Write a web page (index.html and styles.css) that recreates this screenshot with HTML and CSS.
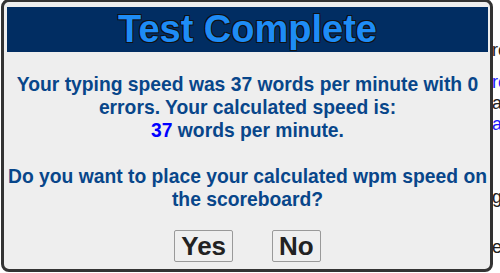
FILE: index.html
```html
<html><head>
<meta charset="UTF-8">
<meta name="viewport" content="width=device-width, initial-scale=1.0">
<title>Typing Test</title>
<link rel="stylesheet" href="styles.css">
</head>
<body>
  <div class="page">
    <p class="line first">results</p>
    <p class="line"><a href="#records">records</a></p>
    <p class="line">average</p>
    <p class="line"><a href="#about">about</a></p>
    <p class="line gap1">go again</p>
    <p class="line gap2">end</p>
  </div>

  <div class="dialog">
    <h1>Test Complete</h1>
    <p class="message">
      Your typing speed was 37 words per minute with 0 errors. Your calculated speed is:<br>
      <span class="wpm">37</span> words per minute.<br><br>
      Do you want to place your calculated wpm speed on the scoreboard?
    </p>
    <div class="buttons">
      <button class="btn">Yes</button>
      <button class="btn">No</button>
    </div>
  </div>
</body></html>
```
FILE: styles.css
```css
body {
  margin: 0;
  font-family: "Liberation Sans", Arial, sans-serif;
  background-color: #fff;
  color: #222;
  overflow: hidden;
}
.page {
  padding-left: 492px;
  padding-top: 40px;
  font-size: 18px;
  line-height: 21px;
}
.line {
  margin: 0;
  white-space: nowrap;
}
.line a {
  color: #1a1aff;
  text-decoration: none;
}
.first {
  margin-bottom: 11px;
}
.gap1 {
  margin-top: 52px;
}
.gap2 {
  margin-top: 29px;
}
.dialog {
  position: absolute;
  left: 1px;
  top: -1px;
  width: 492px;
  height: 273px;
  box-sizing: border-box;
  border: 3px solid #333;
  border-radius: 8px;
  background-color: #eeeeee;
  padding: 5px 2px 0 3px;
}
h1 {
  margin: 0;
  height: 45px;
  line-height: 45px;
  background-color: #012d62;
  color: #1e8cf5;
  font-size: 38px;
  text-align: center;
  text-shadow: -1px -1px 0 #111, 1px -1px 0 #111, -1px 1px 0 #111, 1px 1px 0 #111;
}
.message {
  margin: 21px 0 0;
  font-size: 19.3px;
  line-height: 23px;
  font-weight: bold;
  color: #08468a;
  text-align: center;
}
.wpm {
  color: #0000ff;
}
.buttons {
  display: flex;
  justify-content: center;
  gap: 39px;
  margin-top: 19px;
}
.btn {
  font-family: "Liberation Sans", Arial, sans-serif;
  font-size: 26px;
  font-weight: bold;
  color: #222;
  background-color: #efefef;
  border: 1px solid #999;
  border-radius: 2px;
  height: 32px;
  padding: 0 6px;
  line-height: 30px;
}
```
